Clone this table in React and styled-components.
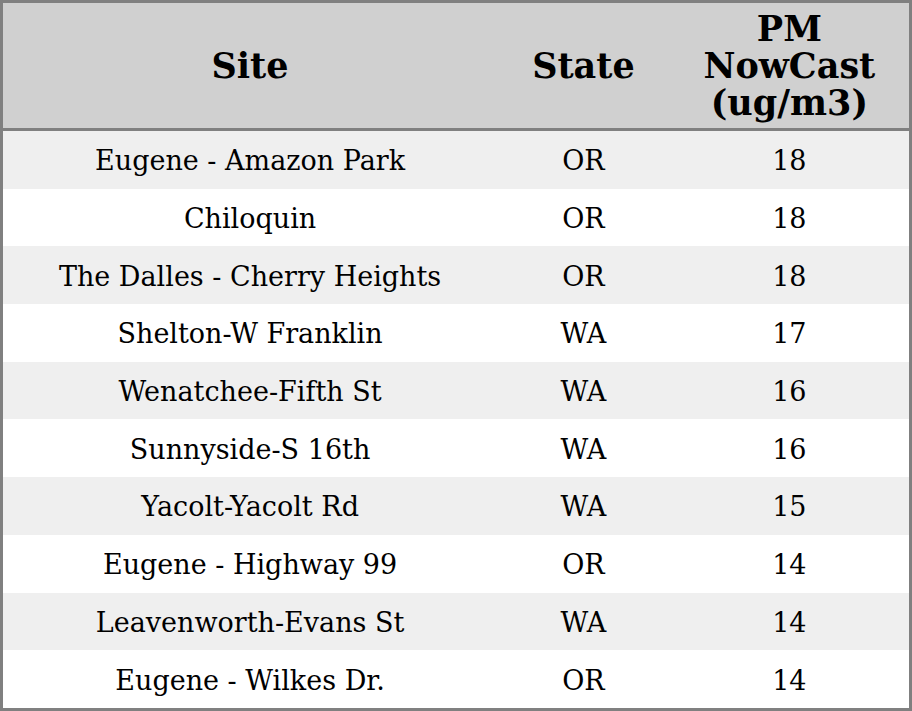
import React from 'react'
import styled, { createGlobalStyle } from 'styled-components'

const rows = [
    { site: 'Eugene - Amazon Park', state: 'OR', pm: 18 },
    { site: 'Chiloquin', state: 'OR', pm: 18 },
    { site: 'The Dalles - Cherry Heights', state: 'OR', pm: 18 },
    { site: 'Shelton-W Franklin', state: 'WA', pm: 17 },
    { site: 'Wenatchee-Fifth St', state: 'WA', pm: 16 },
    { site: 'Sunnyside-S 16th', state: 'WA', pm: 16 },
    { site: 'Yacolt-Yacolt Rd', state: 'WA', pm: 15 },
    { site: 'Eugene - Highway 99', state: 'OR', pm: 14 },
    { site: 'Leavenworth-Evans St', state: 'WA', pm: 14 },
    { site: 'Eugene - Wilkes Dr.', state: 'OR', pm: 14 },
]

export default function App() {
    return (
        <>
            <Global />
            <Table>
                <colgroup>
                    <col style={{ width: 494 }} />
                    <col style={{ width: 172 }} />
                    <col style={{ width: 240 }} />
                </colgroup>
                <thead>
                    <tr>
                        <Th>Site</Th>
                        <Th>State</Th>
                        <Th>PM<br />NowCast<br />(ug/m3)</Th>
                    </tr>
                </thead>
                <tbody>
                    {rows.map((r, i) =>
                        <Row key={i} $striped={i % 2 === 0}>
                            <Td>{r.site}</Td>
                            <Td>{r.state}</Td>
                            <Td>{r.pm}</Td>
                        </Row>
                    )}
                </tbody>
            </Table>
        </>
    )
}

const Global = createGlobalStyle`
    html, body {
        margin: 0;
        padding: 0;
        background: #ffffff;
    }
    body {
        font-family: "DejaVu Serif", serif;
        color: #000;
    }
`

const Table = styled.table`
    width: 912px;
    border-collapse: collapse;
    table-layout: fixed;
    border: 3px solid #808080;
    font-family: "DejaVu Serif", serif;
`

const Th = styled.th`
    background: #d0d0d0;
    font-size: 35px;
    font-weight: bold;
    line-height: 37.3px;
    height: 125px;
    padding: 0;
    text-align: center;
    vertical-align: middle;
    border-bottom: 3px solid #808080;
`

const Row = styled.tr`
    background: ${p => p.$striped ? '#efefef' : '#ffffff'};
`

const Td = styled.td`
    font-size: 27px;
    height: 55.7px;
    padding: 2px 0 0;
    text-align: center;
    vertical-align: middle;
`
